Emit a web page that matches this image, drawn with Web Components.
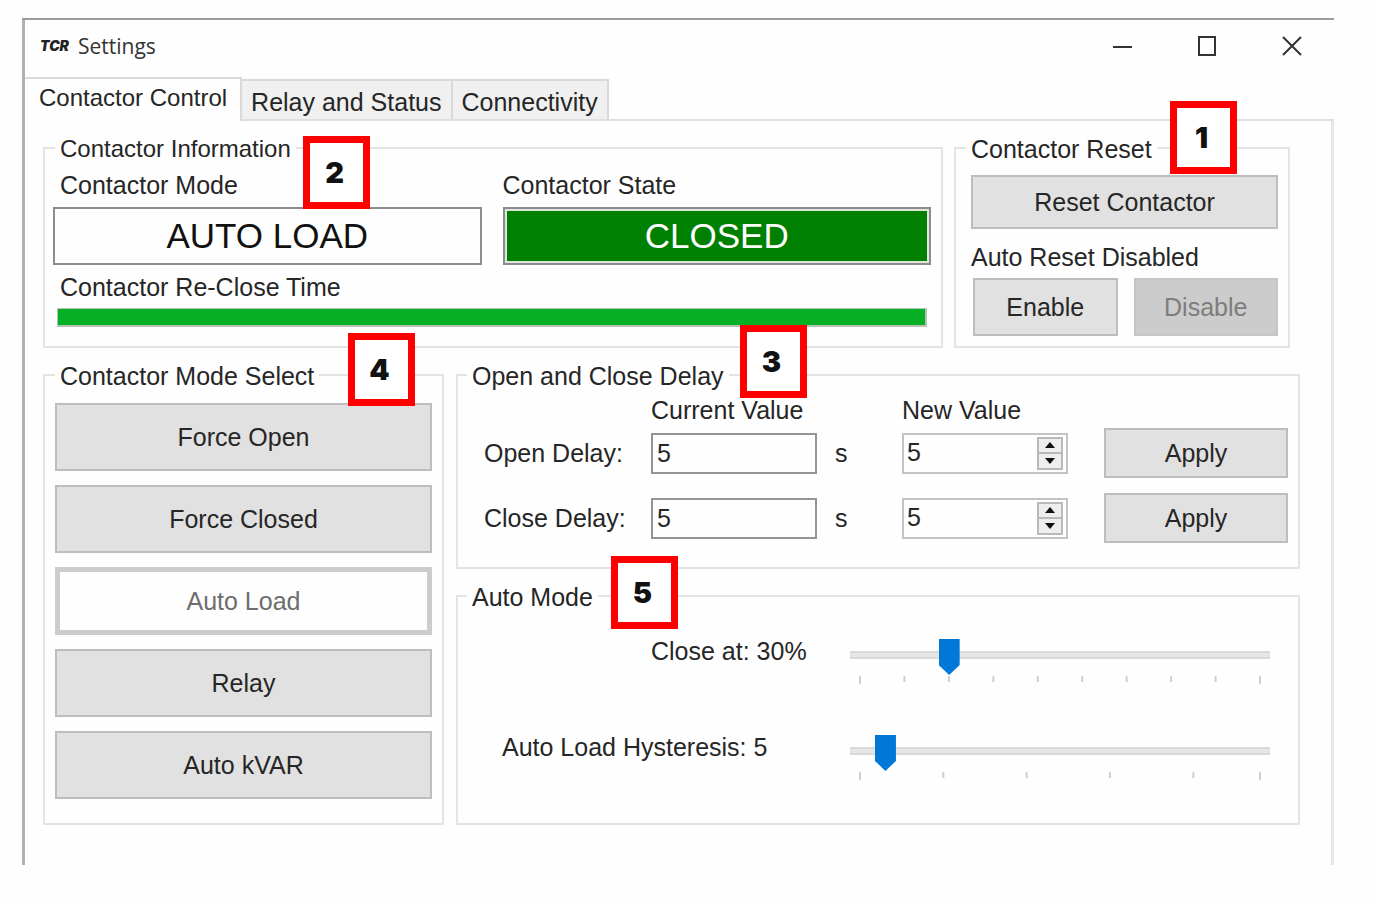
<!DOCTYPE html>
<html lang="en">
<head>
<meta charset="utf-8">
<title>Settings</title>
<style>
  body {
    margin: 18px 40px 40px 22px;
    background: #fefefe;
    color: #262626;
    font: 25px/28px "Liberation Sans", Arial, sans-serif;
  }
</style>
</head>
<body>
<settings-window></settings-window>

<script>
const define = (name, html, setup) => {
  const template = document.createElement('template');
  template.innerHTML = html;
  customElements.define(name, class extends HTMLElement {
    constructor() {
      super();
      this.attachShadow({ mode: 'open' });
    }
    connectedCallback() {
      if (this.shadowRoot.childNodes.length) return;
      const content = template.content.cloneNode(true);
      if (setup) setup(this, content);
      this.shadowRoot.append(content);
    }
  });
};

/* Title bar with the logo, the title and the window buttons */
define('title-bar', `
<style>
  :host { display: flex; align-items: center; height: 52px; padding: 0 0 5px 18px; color: #333; }
  .logo { width: 30px; margin-right: 8px; font: italic 900 14px/20px Inter, sans-serif; color: #222; }
  h1 { flex: 1; margin: 0; font: 21px/28px "Open Sans", "Noto Sans", sans-serif; }
  button { width: 85px; height: 48px; padding: 0; border: 0; background: none; display: grid; place-items: center; }
  svg { width: 20px; height: 20px; fill: none; stroke: #333; stroke-width: 2; }
</style>
<span class="logo">TCR</span>
<h1><slot></slot></h1>
<button aria-label="Minimize"><svg viewBox="0 0 20 20"><path d="M1 11H20"/></svg></button>
<button aria-label="Maximize"><svg viewBox="0 0 20 20"><path d="M2 1H18V19H2Z"/></svg></button>
<button aria-label="Close"><svg viewBox="0 0 20 20"><path d="M1 1L19 19M19 1L1 19"/></svg></button>
`);

/* Row of tabs above the pane */
define('tab-strip', `
<style>
  :host { display: flex; align-items: flex-end; height: 42px; }
</style>
<slot></slot>
`);

define('tab-item', `
<style>
  :host { display: block; }
  button {
    box-sizing: border-box; height: 40px; padding: 4px 9px 0; margin: 0;
    border: 1px solid #d9d9d9; border-width: 2px 2px 0 0; background: #f0f0f0;
    color: inherit; font: inherit; display: block; white-space: nowrap;
  }
  :host([selected]) { position: relative; margin-bottom: -2px; }
  :host([selected]) button { height: 44px; padding: 0 13px 4px 14px; background: #fefefe; font-size: 24px; }
</style>
<button role="tab"><slot></slot></button>
`, (host, root) => {
  root.querySelector('button').setAttribute('aria-selected', host.hasAttribute('selected'));
});

/* Titled frame; the "mark" slot holds a callout that lies over the frame */
define('group-box', `
<style>
  :host { display: block; position: relative; min-width: 0; }
  fieldset {
    box-sizing: border-box; height: 100%; min-width: 0; margin: 0;
    padding: var(--group-padding, 0); border: 2px solid #e4e4e4;
  }
  legend { padding: 2px 5px 0; white-space: nowrap; margin-left: var(--legend-shift, 0); }
  :host([compact]) legend { font-size: 24px; }
</style>
<fieldset><legend></legend><slot></slot></fieldset>
<slot name="mark"></slot>
`, (host, root) => {
  root.querySelector('legend').textContent = host.getAttribute('label');
});

define('call-out', `
<style>
  :host {
    position: absolute; z-index: 2; left: var(--x); top: var(--y);
    box-sizing: border-box; width: 67px; height: 73px; padding-right: 4px;
    display: grid; place-items: center; border: 7px solid #f00; background: #fff;
    color: #111; font: 900 29px/32px Inter, sans-serif;
  }
</style>
<slot></slot>
`);

define('push-button', `
<style>
  :host { display: block; height: 50px; }
  button {
    box-sizing: border-box; width: 100%; height: 100%; padding: 0;
    border: 2px solid #bdbdbd; background: #e1e1e1; color: inherit; font: inherit;
  }
  button:disabled { border-color: #c6c6c6; background: #ccc; color: #7d7d7d; }
  :host([current]) button { border: 5px solid #ccc; background: #fefefe; color: #6e6e6e; }
</style>
<button><slot></slot></button>
`, (host, root) => {
  root.querySelector('button').disabled = host.hasAttribute('disabled');
});

/* Large read-only state box with its label */
define('status-field', `
<style>
  :host { display: block; min-width: 0; }
  label { display: block; margin: 0 0 8px var(--label-indent, 0); }
  input {
    box-sizing: border-box; display: block; width: 100%; height: 58px; padding: 0;
    border: 2px solid #8c8c8c; border-radius: 0; background: #fefefe; color: #111;
    font: inherit; font-size: 35px; text-align: center;
  }
  :host([tone="closed"]) input { background: #008000; color: #fff; box-shadow: inset 0 0 0 2px #dfe8df; }
</style>
<label for="field"></label>
<input id="field" readonly>
`, (host, root) => {
  root.querySelector('label').textContent = host.getAttribute('label');
  root.querySelector('input').value = host.getAttribute('value');
});

define('time-bar', `
<style>
  :host { display: block; }
  label { display: block; margin: 0 0 7px 7px; }
  div { padding: 0 4px; }
  progress {
    appearance: none; box-sizing: border-box; display: block; width: 100%; height: 19px;
    border: 2px solid #b5c4b7; border-width: 1px 2px 2px 1px;
  }
  progress::-webkit-progress-bar { background: #e6e6e6; }
  progress::-webkit-progress-value { background: #06b025; }
</style>
<label for="bar"><slot></slot></label>
<div><progress id="bar" max="100" value="100"></progress></div>
`);

define('number-spinner', `
<style>
  :host {
    box-sizing: border-box; display: flex; height: 41px; padding: 2px 3px 2px 0;
    border: 2px solid #c2c3c7; background: #fefefe; min-width: 0;
  }
  input {
    flex: 1; min-width: 0; padding: 0 0 2px 3px; border: 0; background: none;
    color: inherit; font: inherit; appearance: textfield;
  }
  input::-webkit-inner-spin-button { display: none; }
  div { width: 26px; display: flex; flex-direction: column; }
  button {
    flex: 1; padding: 0; border: 2px solid #b9b9b9; background: #eee; display: grid; place-items: center;
  }
  button + button { border-top: 0; }
  svg { width: 10px; height: 6px; fill: #111; display: block; }
</style>
<input type="number">
<div>
  <button aria-label="Increase"><svg viewBox="0 0 10 6"><path d="M5 0L10 6H0Z"/></svg></button>
  <button aria-label="Decrease"><svg viewBox="0 0 10 6"><path d="M0 0H10L5 6Z"/></svg></button>
</div>
`, (host, root) => {
  const input = root.querySelector('input');
  input.value = host.getAttribute('value');
  input.setAttribute('aria-label', host.getAttribute('label'));
  const [up, down] = root.querySelectorAll('button');
  up.onclick = () => input.stepUp();
  down.onclick = () => input.stepDown();
});

const delayColumns = 'display: grid; grid-template-columns: 167fr 166fr 85fr 166fr 36fr 184fr; align-items: center;';

define('delay-head', `
<style>
  :host { ${delayColumns} margin-bottom: 4px; white-space: nowrap; }
  .current { grid-column: 2; }
  .new { grid-column: 4; }
</style>
<span class="current">Current Value</span>
<span class="new">New Value</span>
`);

define('delay-row', `
<style>
  :host { ${delayColumns} }
  label { white-space: nowrap; }
  input {
    box-sizing: border-box; width: 100%; height: 41px; padding: 0 0 0 4px; border: 2px solid #949494;
    background: #fefefe; color: inherit; font: inherit;
  }
  .unit { padding-left: 18px; }
  push-button { grid-column: 6; }
</style>
<label for="current"></label>
<input id="current" readonly>
<span class="unit">s</span>
<number-spinner></number-spinner>
<push-button>Apply</push-button>
`, (host, root) => {
  root.querySelector('label').textContent = host.getAttribute('label');
  root.querySelector('input').value = host.getAttribute('current');
  const spinner = root.querySelector('number-spinner');
  spinner.setAttribute('value', host.getAttribute('new'));
  spinner.setAttribute('label', 'New ' + host.getAttribute('label'));
});

/* Slider with tick marks below its track */
define('tick-slider', `
<style>
  :host { display: grid; grid-template-columns: 392fr 420fr; }
  label { padding-left: var(--label-indent, 0); white-space: nowrap; }
  .control { padding-top: 2px; }
  input {
    appearance: none; display: block; width: 100%; height: 32px; margin: 0 0 5px; background: none;
  }
  input::-webkit-slider-runnable-track {
    box-sizing: border-box; height: 8px; border: 2px solid #d9d9d9; border-width: 2px 0; background: #e5e7e6;
  }
  input::-webkit-slider-thumb {
    appearance: none; width: 21px; height: 36px; margin-top: -14px; background: #0078d7;
    clip-path: polygon(0 0, 100% 0, 100% 72%, 50% 100%, 0 72%);
  }
  .ticks { padding: 0 10px; }
  svg { display: block; width: 100%; height: 8px; overflow: visible; }
  line { stroke: #cfcfcf; stroke-width: 2; }
</style>
<label for="range"><slot></slot></label>
<div class="control">
  <input id="range" type="range">
  <div class="ticks"><svg aria-hidden="true"></svg></div>
</div>
`, (host, root) => {
  const input = root.querySelector('input');
  const min = +host.getAttribute('min');
  const max = +host.getAttribute('max');
  input.min = min;
  input.max = max;
  input.value = host.getAttribute('value');
  const values = [];
  for (let v = min; v < max; v += 10) values.push(v);
  values.push(max);
  root.querySelector('svg').innerHTML = values.map(v => {
    const x = (v - min) / (max - min) * 100 + '%';
    return `<line x1="${x}" x2="${x}" y1="0" y2="${v === min || v === max ? 8 : 6}"/>`;
  }).join('');
});

define('settings-window', `
<style>
  :host { display: block; border: solid #9c9c9c; border-width: 2px 0 0; }
  .frame, title-bar { border-left: 3px solid #b2b2b2; }
  title-bar { padding-left: 15px; }
  .pane {
    border: solid #dedede; border-width: 2px 3px 0 0; border-right-color: #e6e6e6;
    padding: 12px 31px 40px 18px;
  }
  .top { display: grid; grid-template-columns: 900fr 336fr; gap: 11px; margin: 0 10px 12px 0; }
  .bottom { display: grid; grid-template-columns: 401fr 844fr; gap: 12px; }
  .right { display: flex; flex-direction: column; gap: 12px; min-width: 0; }
  .right > :last-child { flex: 1; }

  .info { --group-padding: 8px 10px 19px 8px; --legend-shift: 2px; }
  .fields { display: grid; grid-template-columns: 1fr 1fr; gap: 21px; margin-bottom: 8px; }
  .fields > :first-child { --label-indent: 7px; }

  .reset { --group-padding: 12px 10px 10px 15px; --legend-shift: -5px; }
  .reset p { margin: 14px 0 7px; }
  .reset > push-button { height: 54px; }
  .pair { display: grid; grid-template-columns: 1fr 1fr; gap: 16px; padding-left: 2px; }
  .pair push-button { height: 58px; }

  .modes { --group-padding: 13px 10px 24px; }
  .stack { display: grid; gap: 14px; }
  .stack push-button { height: 68px; }

  .delay { --group-padding: 6px 10px 24px 26px; --legend-shift: -17px; }
  delay-row + delay-row { margin-top: 15px; }

  .auto { --group-padding: 26px 28px 40px 0; --legend-shift: 9px; }
  tick-slider { --label-indent: 193px; }
  tick-slider + tick-slider { --label-indent: 44px; margin-top: 49px; }
</style>
<title-bar>Settings</title-bar>
<div class="frame">
  <tab-strip role="tablist">
    <tab-item selected>Contactor Control</tab-item>
    <tab-item>Relay and Status</tab-item>
    <tab-item>Connectivity</tab-item>
  </tab-strip>
  <div class="pane">
    <div class="top">
      <group-box class="info" label="Contactor Information" compact>
        <div class="fields">
          <status-field label="Contactor Mode" value="AUTO LOAD"></status-field>
          <status-field label="Contactor State" value="CLOSED" tone="closed"></status-field>
        </div>
        <time-bar>Contactor Re-Close Time</time-bar>
        <call-out slot="mark" style="--x: 260px; --y: 3px">2</call-out>
      </group-box>
      <group-box class="reset" label="Contactor Reset">
        <push-button>Reset Contactor</push-button>
        <p>Auto Reset Disabled</p>
        <div class="pair">
          <push-button>Enable</push-button>
          <push-button disabled>Disable</push-button>
        </div>
        <call-out slot="mark" style="--x: 216px; --y: -32px">1</call-out>
      </group-box>
    </div>
    <div class="bottom">
      <group-box class="modes" label="Contactor Mode Select">
        <div class="stack">
          <push-button>Force Open</push-button>
          <push-button>Force Closed</push-button>
          <push-button current disabled>Auto Load</push-button>
          <push-button>Relay</push-button>
          <push-button>Auto kVAR</push-button>
        </div>
        <call-out slot="mark" style="--x: 305px; --y: -27px">4</call-out>
      </group-box>
      <div class="right">
        <group-box class="delay" label="Open and Close Delay">
          <delay-head></delay-head>
          <delay-row label="Open Delay:" current="5" new="5"></delay-row>
          <delay-row label="Close Delay:" current="5" new="5"></delay-row>
          <call-out slot="mark" style="--x: 284px; --y: -35px">3</call-out>
        </group-box>
        <group-box class="auto" label="Auto Mode">
          <tick-slider min="10" max="100" value="30">Close at: 30%</tick-slider>
          <tick-slider min="2" max="50" value="5">Auto Load Hysteresis: 5</tick-slider>
          <call-out slot="mark" style="--x: 155px; --y: -25px">5</call-out>
        </group-box>
      </div>
    </div>
  </div>
</div>
`);
</script>
</body>
</html>
